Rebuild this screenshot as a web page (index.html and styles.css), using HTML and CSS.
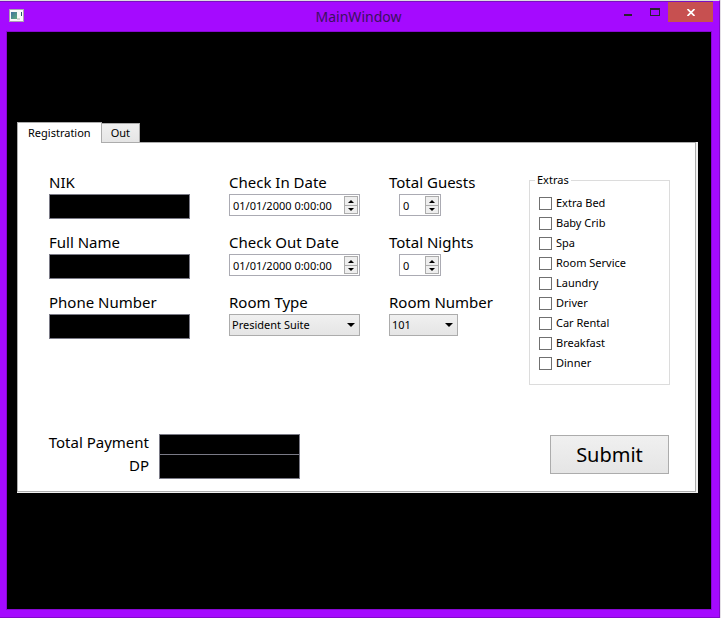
FILE: index.html
```html
<!DOCTYPE html>
<html lang="en">
<head>
<meta charset="utf-8">
<title>MainWindow</title>
<link rel="stylesheet" href="styles.css">
</head>
<body>
<div class="window">
  <header class="titlebar">
    <svg class="app-icon" width="15" height="13" viewBox="0 0 15 13" aria-hidden="true">
      <defs><linearGradient id="g" x1="0" y1="0" x2="1" y2="1"><stop offset="0" stop-color="#3f6f9f"/><stop offset="1" stop-color="#5fae7c"/></linearGradient></defs>
      <rect width="15" height="13" fill="#a9a3b0"/>
      <rect x="1" y="1" width="13" height="11" fill="#f8f8f8"/>
      <rect x="2" y="3" width="6" height="7" fill="url(#g)"/>
      <rect x="8" y="9" width="3" height="2" fill="#d4d4d4"/>
      <rect x="12" y="3" width="1" height="4" fill="#2f5b6b"/>
    </svg>
    <h1 class="title">MainWindow</h1>
    <div class="window-buttons">
      <button class="win-btn" type="button" aria-label="Minimize"><svg width="8" height="12" viewBox="0 0 8 12"><path d="M0 8h8v2H0z" fill="#2a2230"/></svg></button>
      <button class="win-btn" type="button" aria-label="Maximize"><svg width="10" height="12" viewBox="0 0 10 12"><path fill-rule="evenodd" d="M0 2h10v8H0zM1 4v5h8V4z" fill="#2a2230"/></svg></button>
      <button class="win-btn close" type="button" aria-label="Close"><svg width="8" height="7" viewBox="0 0 8 7"><path d="M0.5 0l7 7M7.5 0l-7 7" stroke="#fff" stroke-width="1.7"/></svg></button>
    </div>
  </header>
  <main class="client">
    <div class="tabs" role="tablist">
      <button class="tab active" type="button" role="tab" aria-selected="true">Registration</button>
      <button class="tab" type="button" role="tab" aria-selected="false">Out</button>
    </div>
    <form class="pane">
      <div class="columns">
        <div class="column">
          <div class="field"><label for="nik">NIK</label><input class="dark" id="nik" type="text"></div>
          <div class="field"><label for="name">Full Name</label><input class="dark" id="name" type="text"></div>
          <div class="field"><label for="phone">Phone Number</label><input class="dark" id="phone" type="text"></div>
        </div>
        <div class="column">
          <div class="field"><label for="in">Check In Date</label>
            <div class="spin date"><input id="in" type="text" value="01/01/2000 0:00:00"><span class="steps"><button class="step up" type="button" aria-label="Increase"></button><button class="step down" type="button" aria-label="Decrease"></button></span></div></div>
          <div class="field"><label for="out">Check Out Date</label>
            <div class="spin date"><input id="out" type="text" value="01/01/2000 0:00:00"><span class="steps"><button class="step up" type="button" aria-label="Increase"></button><button class="step down" type="button" aria-label="Decrease"></button></span></div></div>
          <div class="field"><label for="type">Room Type</label>
            <div class="combo date"><select id="type"><option>President Suite</option></select></div></div>
        </div>
        <div class="column">
          <div class="field"><label for="guests">Total Guests</label>
            <div class="spin count"><input id="guests" type="number" value="0"><span class="steps"><button class="step up" type="button" aria-label="Increase"></button><button class="step down" type="button" aria-label="Decrease"></button></span></div></div>
          <div class="field"><label for="nights">Total Nights</label>
            <div class="spin count"><input id="nights" type="number" value="0"><span class="steps"><button class="step up" type="button" aria-label="Increase"></button><button class="step down" type="button" aria-label="Decrease"></button></span></div></div>
          <div class="field"><label for="room">Room Number</label>
            <div class="combo room"><select id="room"><option>101</option></select></div></div>
        </div>
        <fieldset class="extras">
          <legend>Extras</legend>
          <label class="check"><input type="checkbox">Extra Bed</label>
          <label class="check"><input type="checkbox">Baby Crib</label>
          <label class="check"><input type="checkbox">Spa</label>
          <label class="check"><input type="checkbox">Room Service</label>
          <label class="check"><input type="checkbox">Laundry</label>
          <label class="check"><input type="checkbox">Driver</label>
          <label class="check"><input type="checkbox">Car Rental</label>
          <label class="check"><input type="checkbox">Breakfast</label>
          <label class="check"><input type="checkbox">Dinner</label>
        </fieldset>
      </div>
      <div class="footer">
        <div class="payment">
          <label for="total">Total Payment</label><input class="dark" id="total" type="text">
          <label for="dp">DP</label><input class="dark" id="dp" type="text">
        </div>
        <button class="submit" type="submit">Submit</button>
      </div>
    </form>
  </main>
</div>
</body>
</html>
```
FILE: styles.css
```css
* { box-sizing: border-box; }

body {
  margin: 0;
  background: #e4e0e6;
  color: #000;
  font: 11px/20px "Noto Sans", sans-serif;
}

button, input, select {
  margin: 0;
  font: inherit;
  color: inherit;
  border-radius: 0;
}

.window {
  display: flex;
  flex-direction: column;
  min-height: 100vh;
  margin-right: 1px;
  padding: 0 7px 7px 6px;
  background: #a50aff;
  border-top: 1px solid #dcdce0;
  border-right: 1px solid #8208ca;
  border-bottom: 1px solid #8208ca;
}

.titlebar {
  display: grid;
  grid-template-columns: 1fr auto 1fr;
  height: 30px;
  margin: 0 -1px 0 -6px;
  border-top: 1px solid #7a10c0;
}

.app-icon { margin: 7px 0 0 9px; }

.title {
  margin: 0;
  padding-left: 4px;
  font-size: 14px;
  line-height: 29px;
  font-weight: 400;
  color: #3b1060;
}

.window-buttons {
  display: flex;
  justify-content: flex-end;
}

.win-btn {
  display: flex;
  align-items: center;
  justify-content: center;
  width: 27px;
  height: 20px;
  padding: 0;
  border: 0;
  background: transparent;
}

.win-btn.close {
  width: 45px;
  background: #c75050;
}

.client {
  flex: 1;
  padding: 91px 15px 90px 10px;
  background: #000;
  border-left: 1px solid #8708d2;
  border-right: 1px solid #8708d2;
  outline: 1px solid #8708d2;
  outline-offset: -1px;
}

.tabs {
  display: flex;
  align-items: flex-end;
}

.tab {
  height: 19px;
  padding: 0 9px;
  line-height: 18px;
  border: 1px solid #acacac;
  border-left: 0;
  border-bottom: 0;
  background: linear-gradient(#f0f0f0, #e5e5e5);
}

.tab.active {
  position: relative;
  height: 21px;
  margin-bottom: -1px;
  padding: 0 10px;
  border-left: 1px solid #acacac;
  background: #fff;
}

.pane {
  padding: 27px 25px 12px 31px;
  background: #fff;
  border: 1px solid #acacac;
  box-shadow: 0 1px 0 #f0f0f0, 2px 0 0 #f0f0f0, 2px 1px 0 #f0f0f0;
}

.columns {
  display: grid;
  grid-template-columns: 180fr 160fr 140fr 141fr;
}

.field {
  height: 60px;
}

.field > label, .payment label {
  display: block;
  font-size: 15px;
  line-height: 24px;
  white-space: nowrap;
}

.dark {
  display: block;
  width: 141px;
  height: 25px;
  padding: 0 3px;
  border: 1px solid #7a7a86;
  background: #000;
  color: #fff;
}

.date { width: 131px; }
.count { width: 42px; margin-left: 10px; }
.room { width: 69px; }

.spin {
  display: flex;
  height: 22px;
  padding: 1px;
  border: 1px solid #ababb3;
  background: #fff;
}

.spin input {
  flex: 1;
  min-width: 0;
  padding: 2px 0 0 2px;
  border: 0;
  background: transparent;
  appearance: textfield;
}

.spin input::-webkit-inner-spin-button { appearance: none; margin: 0; }

.steps {
  display: grid;
  width: 14px;
  grid-template-rows: 1fr 1fr;
  border: 1px solid #acacac;
}

.step {
  display: grid;
  place-items: center;
  padding: 0;
  border: 0;
  background: #eee;
}

.step.down { border-top: 1px solid #acacac; }

.step::before {
  content: "";
  border: 3px solid transparent;
}

.step.up::before { border-top: 0; border-bottom-color: #000; }
.step.down::before { border-bottom: 0; border-top-color: #000; }

.combo { position: relative; }

.combo select {
  display: block;
  width: 100%;
  height: 22px;
  padding: 0 16px 0 2px;
  appearance: none;
  border: 1px solid #acacac;
  background: linear-gradient(#f0f0f0, #e5e5e5);
}

.combo::after {
  content: "";
  position: absolute;
  right: 5px;
  top: 9px;
  border: 4px solid transparent;
  border-top-color: #000;
  border-bottom: 0;
  pointer-events: none;
}

.extras {
  min-width: 0;
  height: 215px;
  margin: 0;
  padding: 3px 9px 0;
  border: 1px solid #dcdcdc;
}

.extras legend {
  margin-left: -4px;
  padding: 0 2px;
}

.check {
  display: flex;
  align-items: center;
  gap: 4px;
  height: 20px;
}

.check input {
  appearance: none;
  width: 13px;
  height: 13px;
  border: 1px solid #707070;
  background: #fff;
}

.footer {
  display: flex;
  justify-content: space-between;
  align-items: flex-start;
  margin-top: 49px;
}

.payment {
  display: grid;
  grid-template-columns: 100px 141px;
  column-gap: 10px;
  grid-template-rows: 20px 25px;
}

.payment label {
  place-self: center end;
  padding-bottom: 4px;
  line-height: 20px;
}

#total { height: 21px; }

.submit {
  width: 119px;
  height: 39px;
  margin: 1px 1px 0 0;
  padding: 0;
  border: 1px solid #acacac;
  background: linear-gradient(#f0f0f0, #e5e5e5);
  font-size: 20px;
}
```
